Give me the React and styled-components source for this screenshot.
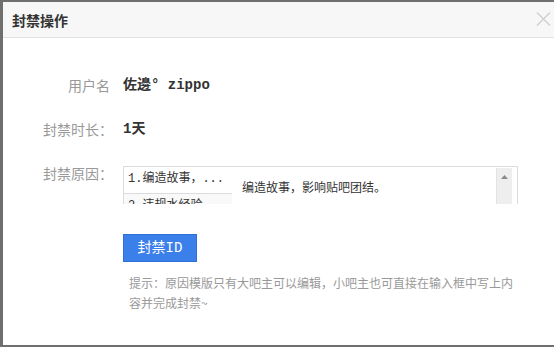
import React from "react";
import styled, { createGlobalStyle } from "styled-components";

const Global = createGlobalStyle`
  html, body { margin: 0; padding: 0; }
  body {
    background: #6f6f6f;
    width: 554px;
    height: 347px;
    overflow: hidden;
    font-family: "Liberation Mono", "Noto Sans CJK SC", monospace;
  }
`;

const Page = styled.div`
  padding: 2px 0 0 3px;
`;

const Dialog = styled.div`
  width: 560px;
  height: 343px;
  background: #fff;
  display: flex;
  flex-direction: column;
`;

const Header = styled.div`
  height: 35px;
  background: #f7f7f7;
  border-bottom: 1px solid #e3e3e3;
  display: flex;
  align-items: center;
  justify-content: space-between;
  padding: 0 0 0 9px;
  width: 545px;
`;

const Title = styled.h1`
  margin: 0;
  font-size: 14px;
  line-height: 20px;
  font-weight: bold;
  color: #333;
  font-family: "Noto Sans CJK SC", sans-serif;
`;

const Close = styled.button`
  border: 0;
  background: none;
  padding: 0;
  width: 15px;
  height: 14px;
  margin: -1px 6px 0 0;
  display: flex;
  cursor: pointer;
`;

const Body = styled.div`
  display: flex;
  flex-direction: column;
  padding-top: 37px;
`;

const Row = styled.div`
  display: flex;
  align-items: flex-start;
  gap: 10px;
  margin-bottom: ${(p) => p.$mb || 0}px;
`;

const Label = styled.div`
  width: 110px;
  text-align: right;
  font-size: 14px;
  line-height: 20px;
  color: #999;
  font-family: "Noto Sans CJK SC", sans-serif;
  padding-right: ${(p) => p.$pr || 0}px;
  box-sizing: border-box;
`;

const Value = styled.div`
  font-size: 14px;
  line-height: 20px;
  font-weight: bold;
  color: #333;
`;

const Clip = styled.div`
  margin-top: 3px;
  width: 395px;
  height: 38px;
  overflow: hidden;
`;

const Frame = styled.div`
  height: 70px;
  border: 1px solid #dcdcdc;
  display: flex;
`;

const SelectList = styled.div`
  width: 108px;
  display: flex;
  flex-direction: column;
`;

const Option = styled.div`
  height: 26px;
  box-sizing: border-box;
  padding: 5px 0 0 4px;
  font-size: 12px;
  line-height: 14px;
  color: #333;
  white-space: nowrap;
  background: ${(p) => (p.$alt ? "#f9f9f9" : "#fff")};
  border-top: ${(p) => (p.$alt ? "1px solid #dcdcdc" : "0")};
`;

const TextArea = styled.div`
  flex: 1;
  display: flex;
  justify-content: space-between;
`;

const AreaText = styled.div`
  padding: 13px 0 0 10px;
  font-size: 12px;
  line-height: 14px;
  color: #333;
  font-family: "Noto Sans CJK SC", sans-serif;
`;

const Scrollbar = styled.div`
  width: 16px;
  margin: 1px 5px 0 0;
  background: #eeeeee;
  border-left: 1px solid #e2e2e2;
  display: flex;
  justify-content: center;
  padding-top: 7px;
  box-sizing: border-box;
`;

const Actions = styled.div`
  display: flex;
  flex-direction: column;
  padding-left: 120px;
  margin-top: 30px;
`;

const Button = styled.button`
  width: 74px;
  height: 28px;
  border: 1px solid #2f6fd8;
  background: #3b7fea;
  color: #fff;
  font-size: 14px;
  line-height: 20px;
  font-family: "Liberation Mono", "Noto Sans CJK SC", monospace;
  padding: 0;
  cursor: pointer;
`;

const Tip = styled.p`
  margin: 11px 0 0 6px;
  width: 388px;
  font-size: 12px;
  line-height: 20px;
  color: #999;
  font-family: "Noto Sans CJK SC", sans-serif;
`;

export default function App() {
  return (
    <>
      <Global />
      <Page>
        <Dialog>
          <Header>
            <Title>封禁操作</Title>
            <Close aria-label="close">
              <svg width="15" height="14" viewBox="0 0 15 14">
                <path d="M1 0.5 L14 13.5 M14 0.5 L1 13.5" stroke="#cfcfcf" strokeWidth="1.3" fill="none" />
              </svg>
            </Close>
          </Header>
          <Body>
            <Row $mb={24}>
              <Label $pr={3}>用户名</Label>
              <Value>佐邊° zippo</Value>
            </Row>
            <Row $mb={24}>
              <Label>封禁时长：</Label>
              <Value>1天</Value>
            </Row>
            <Row>
              <Label>封禁原因：</Label>
              <Clip>
                <Frame>
                  <SelectList>
                    <Option>1.编造故事，...</Option>
                    <Option $alt>2.违规水经验</Option>
                  </SelectList>
                  <TextArea>
                    <AreaText>编造故事，影响贴吧团结。</AreaText>
                    <Scrollbar>
                      <svg width="7" height="4" viewBox="0 0 7 4">
                        <path d="M0 4 L3.5 0 L7 4 Z" fill="#8a8a8a" />
                      </svg>
                    </Scrollbar>
                  </TextArea>
                </Frame>
              </Clip>
            </Row>
            <Actions>
              <Button>封禁ID</Button>
              <Tip>提示：原因模版只有大吧主可以编辑，小吧主也可直接在输入框中写上内容并完成封禁~</Tip>
            </Actions>
          </Body>
        </Dialog>
      </Page>
    </>
  );
}
